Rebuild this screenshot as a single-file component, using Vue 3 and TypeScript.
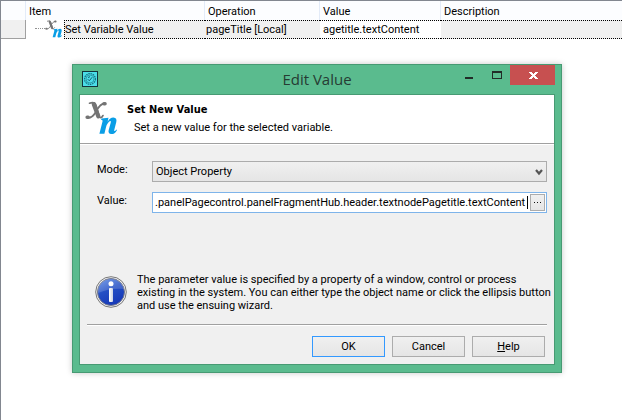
<script setup lang="ts">
import { ref } from 'vue'

const columns: string[] = ['Item', 'Operation', 'Value', 'Description']
const mode = ref<string>('Object Property')
const value = ref<string>('.panelPagecontrol.panelFragmentHub.header.textnodePagetitle.textContent')
</script>

<template>
  <main class="desktop">
    <table class="grid">
      <colgroup>
        <col class="col-handle" />
        <col class="col-item" />
        <col class="col-operation" />
        <col class="col-value" />
        <col />
      </colgroup>
      <thead>
        <tr>
          <th></th>
          <th v-for="column in columns" :key="column">{{ column }}</th>
        </tr>
      </thead>
      <tbody>
        <tr>
          <td class="handle"></td>
          <td class="item">
            <div class="tree">
              <span class="branch"></span>
              <svg class="tree-icon" viewBox="0 0 32 34" preserveAspectRatio="none" aria-hidden="true">
                <use href="#xn-symbol" />
              </svg>
              <span class="item-name">Set Variable Value</span>
            </div>
          </td>
          <td class="cell operation">pageTitle [Local]</td>
          <td class="cell editing">agetitle.textContent</td>
          <td class="cell"></td>
        </tr>
      </tbody>
    </table>

    <section class="dialog" role="dialog" aria-labelledby="dialog-title">
      <header class="titlebar">
        <svg class="app-icon" viewBox="0 0 16 16" aria-hidden="true">
          <rect x="0.5" y="0.5" width="15" height="15" fill="#4bdde8" stroke="#12343c" />
          <circle cx="8" cy="8" r="5.4" fill="none" stroke="#15717f" stroke-width="1.2" stroke-dasharray="1.6 0.7" />
          <circle cx="8" cy="8" r="4" fill="none" stroke="#1d8794" stroke-width="0.7" />
          <path d="M5.800 8.200l1.500 1.600 2.900-3.600M6 6.500l2-.8" fill="none" stroke="#15606f" />
        </svg>
        <h1 id="dialog-title">Edit Value</h1>
        <div class="window-buttons">
          <button type="button" class="window-button" aria-label="Minimize">
            <svg viewBox="0 0 10 8"><path d="M0 6h8v2H0z" fill="#222c28" /></svg>
          </button>
          <button type="button" class="window-button" aria-label="Maximize">
            <svg viewBox="0 0 10 8"><path d="M0 0h10v8H0zM1 2v5h8V2z" fill="#222c28" fill-rule="evenodd" /></svg>
          </button>
          <button type="button" class="window-button close" aria-label="Close">
            <svg viewBox="0 0 10 8">
              <path d="M1 0h3v1h1v1h1v-1h1v-1h3v1h-1v1h-1v1h-1v1h1v1h1v1h1v1h-3v-1h-1v-1h-1v1h-1v1h-3v-1h1v-1h1v-1h1v-1h-1v-1h-1v-1h-1z" fill="#fff" />
            </svg>
          </button>
        </div>
      </header>

      <div class="client">
        <div class="banner">
          <svg class="banner-icon" viewBox="0 0 32 34" aria-hidden="true">
            <symbol id="xn-symbol" viewBox="0 0 32 34">
              <g fill="none" stroke="#747474" stroke-linecap="round">
                <path d="M4.500 2.200C7.500 1.200 10 1.400 11 4L14 14.500C14.800 17.500 16.500 17.300 18 14.500" stroke-width="1.600" />
                <path d="M8.800 3.200L13.400 15.400" stroke-width="4.200" />
                <path d="M20 2.500C15 2 12.500 8 10.500 11.500C8 15.500 6 17.200 2.600 16.800" stroke-width="1.800" />
                <path d="M19 2.700h1M2.200 16.300h.9" stroke-width="3.600" />
              </g>
              <path d="M16.500 17.500l7-.8-.9 4C24.500 18 26.300 16.500 28.400 16.600c2.700.1 3.500 2 2.900 4.500l-2 7.700c-.4 1.700.4 1.900 2.200-.4l.5.500c-1.600 3-3.400 4.300-5.700 4.200-2.500-.1-3.200-1.800-2.600-4l2-7.300c.5-2-.4-2.300-1.700-1.100-1.500 1.400-2.400 3.200-3 5.500l-1.600 6.600h-5l3.100-12.200c.3-1.300-.1-1.700-1.500-1.800z" fill="#0a9ee6" />
            </symbol>
            <use href="#xn-symbol" />
          </svg>
          <div class="banner-text">
            <h2>Set New Value</h2>
            <p>Set a new value for the selected variable.</p>
          </div>
        </div>

        <form class="body" @submit.prevent>
          <div class="fields">
            <label for="mode">Mode:</label>
            <div class="select-box">
              <select id="mode" v-model="mode">
                <option>Object Property</option>
              </select>
              <svg viewBox="0 0 8 7" aria-hidden="true">
                <path d="M1 1l3 3.500L7 1" fill="none" stroke="#555" stroke-width="2.200" />
              </svg>
            </div>
            <label for="value">Value:</label>
            <div class="value-box">
              <input id="value" v-model="value" type="text" spellcheck="false" />
              <span class="caret"></span>
              <button type="button" class="ellipsis" aria-label="Browse">
                <svg viewBox="0 0 8 1"><path d="M0 0h1v1H0zM3 0h1v1H3zM6 0h1v1H6z" fill="#111" /></svg>
              </button>
            </div>
          </div>

          <div class="hint">
            <svg viewBox="0 0 32 32" aria-hidden="true">
              <defs>
                <linearGradient id="info-fill" x1="0" y1="0" x2="0.500" y2="1">
                  <stop offset="0" stop-color="#5f8ee8" />
                  <stop offset="0.500" stop-color="#244fc4" />
                  <stop offset="1" stop-color="#1739b8" />
                </linearGradient>
                <linearGradient id="info-stem" x1="0" y1="0" x2="1" y2="0">
                  <stop offset="0" stop-color="#fff" />
                  <stop offset="1" stop-color="#ccd2e2" />
                </linearGradient>
              </defs>
              <circle cx="16" cy="16" r="15.300" fill="#f2f2f2" stroke="#777" />
              <circle cx="16" cy="16" r="13.500" fill="url(#info-fill)" stroke="#777b8c" />
              <path d="M3 17C2 7 9 3 16 3s13 5 13 10C22 12 11 13 3 17z" fill="#fff" opacity=".16" />
              <circle cx="16" cy="7.800" r="2.500" fill="#fff" />
              <rect x="14" y="12" width="4" height="14" rx="1" fill="url(#info-stem)" />
            </svg>
            <p>
              The parameter value is specified by a property of a window, control or process
              existing in the system. You can either type the object name or click the ellipsis button
              and use the ensuing wizard.
            </p>
          </div>

          <footer class="actions">
            <button type="submit" class="push primary">OK</button>
            <button type="button" class="push">Cancel</button>
            <button type="button" class="push"><u>H</u>elp</button>
          </footer>
        </form>
      </div>
    </section>
  </main>
</template>

<style>
body {
  background: #fff;
}
</style>

<style scoped>
* {
  box-sizing: border-box;
}

.desktop {
  position: relative;
  min-height: 100vh;
  overflow: hidden;
  border-top: 1px solid #828790;
  border-left: 1px solid #828790;
  color: #000;
  font: 11px/13px Roboto, sans-serif;
}

h1,
h2,
p {
  margin: 0;
}

button,
input,
select {
  color: inherit;
  font: inherit;
}

.grid {
  width: 100%;
  table-layout: fixed;
  border-spacing: 0;
}

.col-handle {
  width: 25px;
}

.col-item {
  width: 179px;
}

.col-operation {
  width: 115px;
}

.col-value {
  width: 121px;
}

.grid th {
  height: 19px;
  padding: 2px 3px 0;
  border-right: 1px solid #e3ebf8;
  background: #fcfdff;
  font-weight: normal;
  text-align: left;
}

.grid th:last-child {
  border-right: 0;
}

.grid td {
  height: 19px;
  padding: 0;
  white-space: nowrap;
}

.grid .handle {
  border: solid #a0a0a0;
  border-width: 0 1px 1px 0;
  background: #f0f0f0;
}

.tree {
  display: flex;
  height: 19px;
}

.branch {
  width: 10px;
  margin: 8px 0 0 9px;
  border-top: 1px dotted #909090;
}

.tree-icon {
  width: 17px;
  height: 18px;
  margin-right: 2px;
}

.item-name {
  flex: 1;
  padding: 2px 0 0;
  border: 1px dotted #000;
  border-right: 0;
  background: #f0f0f0;
}

.grid .cell {
  padding-left: 1px;
  border: dotted #000;
  border-width: 1px 0;
  background: #f0f0f0;
}

.grid .editing {
  padding-left: 3px;
  background: #fff;
}

.dialog {
  position: absolute;
  top: 63px;
  right: 60px;
  left: 71px;
  padding: 0 6px 7px;
  border: 1px solid #479a73;
  background: #5abb8e;
  box-shadow: 0 0 6px rgb(0 0 0 / 22%);
}

.titlebar {
  display: grid;
  grid-template-columns: 1fr auto 1fr;
  height: 29px;
}

.app-icon {
  width: 16px;
  height: 16px;
  margin: 6px 3px;
}

.titlebar h1 {
  color: #263c33;
  font: 15px/28px "Open Sans", sans-serif;
}

.window-buttons {
  display: flex;
  justify-content: flex-end;
}

.window-button {
  display: flex;
  justify-content: center;
  width: 27px;
  height: 20px;
  padding: 6px 0 0;
  border: 0;
  background: transparent;
}

.window-button svg {
  width: 10px;
  height: 8px;
}

.close {
  width: 45px;
  padding-top: 7px;
  background: #c75050;
}

.client {
  border: 1px solid #479a73;
  background: #f0f0f0;
}

.banner {
  display: flex;
  gap: 10px;
  height: 49px;
  padding: 6px 5px;
  border-bottom: 1px solid #a0a0a0;
  background: #fff;
}

.banner-icon {
  width: 32px;
  height: 34px;
}

.banner h2 {
  padding-top: 2px;
  font: bold 11px/13px "DejaVu Sans Condensed", "DejaVu Sans", sans-serif;
}

.banner p {
  margin: 5px 7px;
}

.body {
  padding: 16px 7px 7px;
  border-top: 1px solid #fff;
}

.fields {
  display: grid;
  grid-template-columns: 45px 1fr;
  gap: 10px;
  padding-left: 10px;
}

.fields label {
  padding-top: 2px;
}

.select-box,
.value-box {
  position: relative;
  display: flex;
  height: 21px;
}

.select-box svg {
  position: absolute;
  top: 8px;
  right: 4px;
  width: 8px;
  height: 7px;
  pointer-events: none;
}

.select-box select {
  width: 100%;
  padding: 0 3px;
  border: 1px solid #acacac;
  border-radius: 0;
  background: linear-gradient(#f0f0f0, #e5e5e5);
  appearance: none;
}

.value-box {
  align-items: center;
  padding: 1px;
  border: 1px solid #7eb4ea;
  background: #fff;
}

.value-box input {
  flex: 1;
  min-width: 0;
  padding: 0 0 0 1px;
  border: 0;
  background: transparent;
  outline: 0;
}

.caret {
  width: 1px;
  height: 13px;
  margin-right: 2px;
  background: #000;
}

.ellipsis {
  display: flex;
  align-items: center;
  justify-content: center;
  width: 15px;
  height: 17px;
  padding: 0;
  border: 1px solid #acacac;
  background: linear-gradient(#f0f0f0, #e5e5e5);
}

.ellipsis svg {
  width: 8px;
  height: 1px;
}

.hint {
  display: flex;
  gap: 10px;
  margin: 60px -7px 0 0;
  padding: 0 0 12px 8px;
}

.hint svg {
  flex: none;
  width: 32px;
  height: 32px;
  margin-top: 3px;
}

.actions {
  display: flex;
  justify-content: flex-end;
  gap: 7px;
  padding: 11px 2px 0;
  border-top: 1px solid #a0a0a0;
  box-shadow: inset 0 1px #fff;
}

.push {
  width: 73px;
  height: 21px;
  padding: 0;
  border: 1px solid #acacac;
  background: linear-gradient(#f0f0f0, #e5e5e5);
}

.primary {
  border-color: #3399ff;
}
</style>
